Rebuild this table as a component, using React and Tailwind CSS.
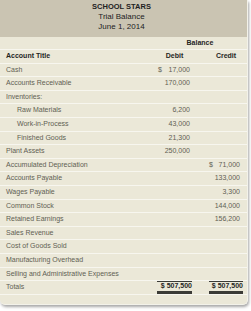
const rows = [
  { title: "Cash", debit: "17,000", debitSign: true },
  { title: "Accounts Receivable", debit: "170,000" },
  { title: "Inventories:" },
  { title: "Raw Materials", debit: "6,200", indent: true },
  { title: "Work-in-Process", debit: "43,000", indent: true },
  { title: "Finished Goods", debit: "21,300", indent: true },
  { title: "Plant Assets", debit: "250,000" },
  { title: "Accumulated Depreciation", credit: "71,000", creditSign: true },
  { title: "Accounts Payable", credit: "133,000" },
  { title: "Wages Payable", credit: "3,300" },
  { title: "Common Stock", credit: "144,000" },
  { title: "Retained Earnings", credit: "156,200" },
  { title: "Sales Revenue" },
  { title: "Cost of Goods Sold" },
  { title: "Manufacturing Overhead" },
  { title: "Selling and Administrative Expenses" },
];

function Amount({ value, sign, pad }) {
  if (!value) return <div />;
  return (
    <div className={`flex justify-between ${pad}`}>
      <span>{sign ? "$" : ""}</span>
      <span>{value}</span>
    </div>
  );
}

export default function App() {
  return (
    <div
      className="h-[311px] w-[251px] bg-white"
      style={{ fontFamily: '"Liberation Sans", Arial, sans-serif' }}
    >
      <div className="w-[248px] overflow-hidden rounded-b-[5px] border-r border-b border-[#f3f2ea] bg-[#ebe8d8] shadow-[1px_2px_3px_rgba(0,0,0,0.35)]">
        {/* Title band */}
        <div className="flex h-[37px] flex-col items-center bg-[#cac4b2] pt-[2px] pr-[4px] text-[#222] leading-[10px]">
          <div className="text-[7.5px] font-bold">SCHOOL STARS</div>
          <div className="text-[8px]">Trial Balance</div>
          <div className="text-[8px]">June 1, 2014</div>
        </div>

        <div className="text-[7px] text-[#26261f] font-bold">
          <div className="flex h-[13px] items-center border-b border-[#f7f6ef]">
            <div className="w-[157px]" />
            <div className="w-[86px] text-center">Balance</div>
          </div>
          <div className="flex h-[13.6px] items-center border-b border-[#f7f6ef]">
            <div className="w-[157px] pl-[6px]">Account Title</div>
            <div className="w-[35px] text-center">Debit</div>
            <div className="ml-[17px] w-[34px] text-center">Credit</div>
          </div>
        </div>

        <div className="text-[7px] text-[#616053]">
          {rows.map((row) => (
            <div
              key={row.title}
              className="flex h-[13.6px] items-center border-b border-[#f7f6ef]"
            >
              <div className={`w-[157px] ${row.indent ? "pl-[17px]" : "pl-[6px]"}`}>
                {row.title}
              </div>
              <div className="w-[35px]">
                <Amount value={row.debit} sign={row.debitSign} pad="pl-[1px] pr-[2px]" />
              </div>
              <div className="ml-[17px] w-[34px]">
                <Amount value={row.credit} sign={row.creditSign} pad="pr-[3px]" />
              </div>
            </div>
          ))}

          {/* Totals */}
          <div className="flex h-[13.6px] items-center border-b border-[#f7f6ef]">
            <div className="w-[157px] pl-[6px]">Totals</div>
            <div className="flex h-full w-[35px] items-center justify-end border-t border-b-[3px] border-[#3b3b36] border-b-double text-[7px] font-bold text-[#26261f]">
              $ 507,500
            </div>
            <div className="ml-[17px] flex h-full w-[34px] items-center justify-end border-t border-b-[3px] border-[#3b3b36] border-b-double text-[7px] font-bold text-[#26261f]">
              $ 507,500
            </div>
          </div>
          <div className="h-[9px]" />
        </div>
      </div>
    </div>
  );
}
